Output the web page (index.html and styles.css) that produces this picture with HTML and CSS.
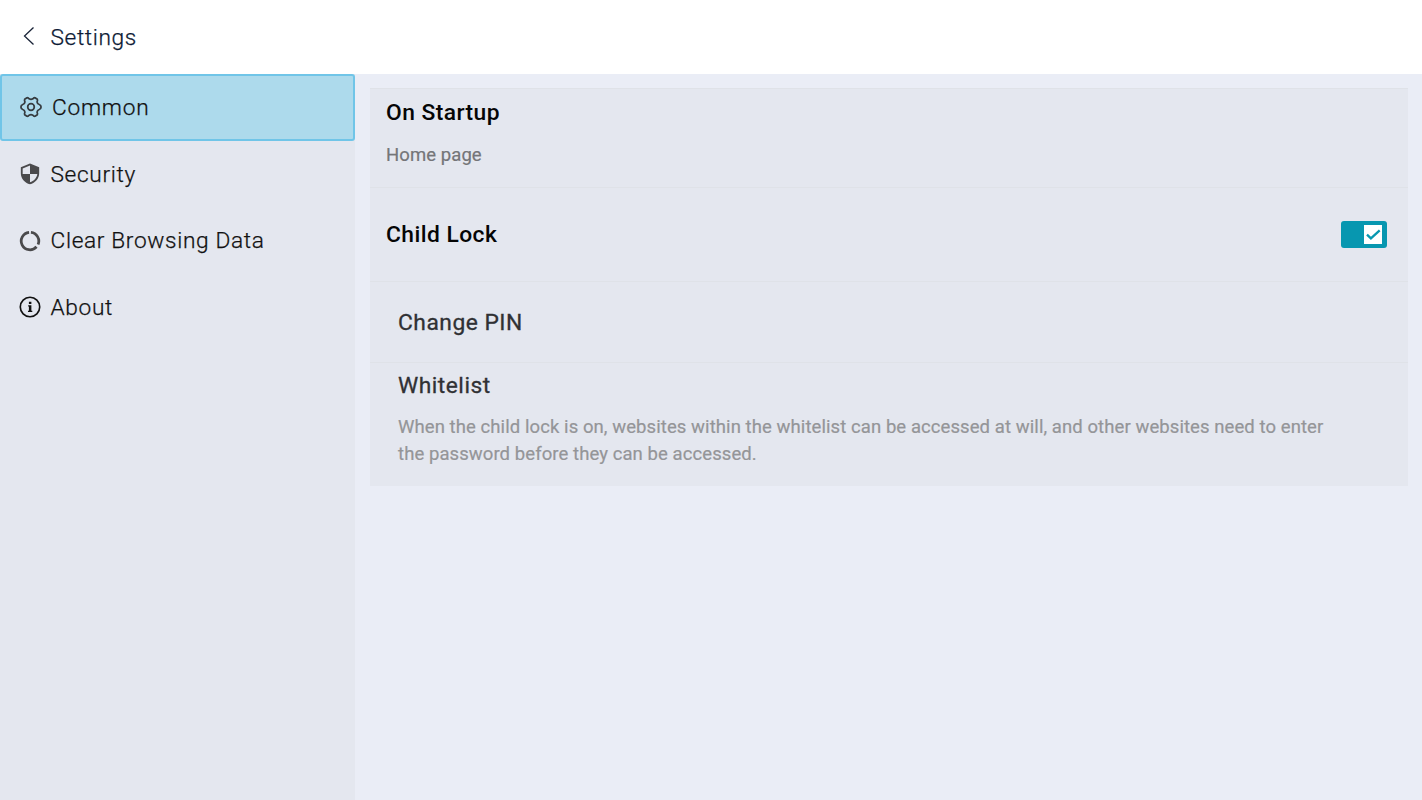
FILE: index.html
```
<!DOCTYPE html>
<html lang="en">
<head>
<meta charset="utf-8">
<title>Settings</title>
<link rel="stylesheet" href="styles.css">
</head>
<body>
<header class="topbar">
  <svg class="back" width="14" height="20" viewBox="0 0 14 20"><path d="M11.5 1.5 2.5 10l9 8.5"/></svg>
  <h1 class="title">Settings</h1>
</header>
<div class="layout">
  <nav class="sidebar">
    <a class="item active">
      <svg class="icon gear" viewBox="0 0 24 24" fill="none" stroke="#363c40" stroke-width="1.9" stroke-linejoin="round"><path d="M7.600 1.900Q9.200 1.700 9.900 3.100Q12 4.300 14.100 3.100Q14.800 1.700 16.400 1.900L18.900 3.600Q19.400 5 18.600 6.400Q18.800 8.700 21 9.300Q23 10 23 12Q23 14 21 14.700Q18.800 15.300 18.600 17.600Q19.400 19 18.900 20.400L16.400 22.100Q14.800 22.300 14.100 20.900Q12 19.700 9.900 20.900Q9.200 22.300 7.600 22.100L5.100 20.400Q4.600 19 5.400 17.600Q5.200 15.300 3 14.700Q1 14 1 12Q1 10 3 9.300Q5.200 8.700 5.400 6.400Q4.600 5 5.100 3.600Z"/><circle cx="12" cy="12" r="3.600"/></svg>
      <span class="label">Common</span>
    </a>
    <a class="item">
      <svg class="icon" viewBox="0 0 24 24" fill="#4a4a4c"><path d="M12 .5 2 4.700v6.400c0 5.600 4.200 10.700 10 12 5.800-1.300 10-6.400 10-12V4.700zM12 12h8c-.6 4.200-3.800 7.800-8 9V12H4V6L12 2.700z"/></svg>
      <span class="label">Security</span>
    </a>
    <a class="item">
      <svg class="icon" viewBox="0 0 24 24" fill="none" stroke="#4a4a4c" stroke-width="3"><path d="M13 2.600A9.500 9.500 0 0 1 20.800 15.800M19.100 18.300A9.500 9.500 0 1 1 11 2.600"/></svg>
      <span class="label">Clear Browsing Data</span>
    </a>
    <a class="item">
      <svg class="icon" viewBox="0 0 24 24"><circle cx="12" cy="12" r="10.600" fill="none" stroke="#111" stroke-width="1.800"/><path d="M10.800 6.300h2.700v2.300h-2.700zM10 10.200h3.500v6h1v1.300H9.800v-1.300h1v-4.700H10z" fill="#111"/></svg>
      <span class="label">About</span>
    </a>
  </nav>
  <main class="content">
    <section class="card">
      <div class="row startup">
        <h2 class="heading">On Startup</h2>
        <p class="value">Home page</p>
      </div>
      <div class="row lock">
        <h2 class="heading">Child Lock</h2>
        <span class="switch"><svg class="knob" width="18" height="19" viewBox="0 0 18 19"><path d="M3 9.700 6.900 13.400 15.700 5.300"/></svg></span>
      </div>
      <div class="row pin">
        <h3 class="heading sub">Change PIN</h3>
      </div>
      <div class="row whitelist">
        <h3 class="heading sub">Whitelist</h3>
        <p class="desc">When the child lock is on, websites within the whitelist can be accessed at will, and other websites need to enter<br>the password before they can be accessed.</p>
      </div>
    </section>
  </main>
</div>
</body>
</html>
```
FILE: styles.css
```
* { box-sizing: border-box; }
body {
  margin: 0;
  height: 800px;
  overflow: hidden;
  display: flex;
  flex-direction: column;
  background: #eaedf6;
  font-family: Roboto, "Liberation Sans", sans-serif;
}
h1, h2, h3, p { margin: 0; }
.topbar {
  height: 74px;
  flex: none;
  display: flex;
  align-items: center;
  padding-left: 22px;
  gap: 14.5px;
  background: #fff;
}
.back { fill: none; stroke: #1a2438; stroke-width: 1.3; margin-top: -2px; }
.title { font-size: 22.7px; font-weight: 300; letter-spacing: .6px; color: #0c1a35; -webkit-text-stroke: .25px; }
.layout { flex: 1; display: flex; }
.sidebar { width: 355px; background: #e4e7ef; }
.item {
  height: 66.7px;
  display: flex;
  align-items: center;
  padding-left: 18.5px;
  gap: 10px;
  color: #111;
}
.item.active {
  padding-left: 18px;
  background: #addaec;
  border: 2px solid #70c5e8;
  border-radius: 3px;
}
.icon { width: 22px; height: 22px; flex: none; }
.active .label { letter-spacing: .75px; }
.label { font-size: 22.7px; font-weight: 300; letter-spacing: .65px; white-space: nowrap; -webkit-text-stroke: .25px; }
.content { flex: 1; padding: 14px 14px 0 15px; }
.card { background: #e4e7ef; border-top: 1px solid #dfe2e8; }
.row { border-bottom: 1px solid #dfe2e8; padding: 0 21px 0 16px; }
.heading { font-size: 22.8px; line-height: 28px; font-weight: 500; letter-spacing: .45px; color: #050505; }
.startup { height: 99px; padding-top: 10px; }
.value { margin-top: 16px; font-size: 18.5px; line-height: 24px; letter-spacing: .08px; color: #747578; -webkit-text-stroke: .2px; }
.lock { height: 94px; display: flex; align-items: center; justify-content: space-between; }
.switch { width: 46px; height: 27px; border-radius: 3px; background: #0797b0; display: flex; align-items: center; justify-content: flex-end; padding-right: 5px; }
.knob { background: #fff; fill: none; stroke: #0797b0; stroke-width: 2.3; }
.pin { height: 81px; padding: 1px 28px 0; display: flex; align-items: center; }
.sub { font-weight: 400; letter-spacing: .5px; color: #303134; -webkit-text-stroke: .3px; }
.whitelist { height: 123px; padding: 9px 28px 0; border-bottom: 0; }
.desc { margin-top: 14px; font-size: 18.5px; line-height: 27px; letter-spacing: .08px; color: #949598; white-space: nowrap; -webkit-text-stroke: .2px; }
```
